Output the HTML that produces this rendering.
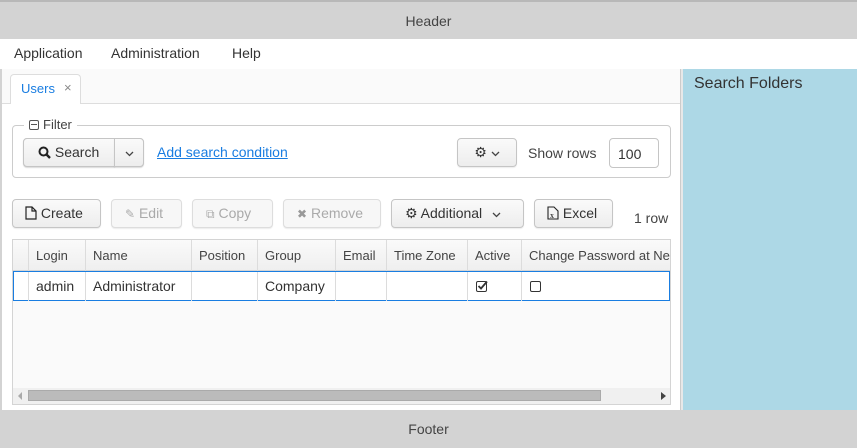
<!DOCTYPE html>
<html><head><meta charset="utf-8"><style>
*{box-sizing:border-box;margin:0;padding:0}
body{width:857px;height:448px;position:relative;overflow:hidden;font-family:"Liberation Sans","DejaVu Sans",sans-serif;font-size:14px;color:#333;background:#fff}
.a{position:absolute}
.btn{position:absolute;height:29px;border:1px solid #c5c5c5;border-radius:4px;background:linear-gradient(#fafafa,#ededed);box-shadow:0 1px 1px rgba(0,0,0,.08);font-size:14px;line-height:27px;color:#333;white-space:nowrap}
.dis{color:#aaa;border-color:#ddd;background:#f7f7f7}
.th{position:absolute;top:0;height:31px;line-height:31px;font-size:13px;color:#444;padding-left:7px;border-right:1px solid #dcdcdc;white-space:nowrap;overflow:hidden}
.td{position:absolute;top:0;height:29px;line-height:29px;font-size:14px;color:#333;padding-left:7px;border-right:1px solid #dcdcdc;white-space:nowrap}
</style></head><body>
<div class="a" style="left:0;top:0;width:857px;height:39px;background:#d3d3d3;border-top:2px solid #b8b8b8;text-align:center;line-height:38px;font-size:14px;color:#444">Header</div>
<div class="a" style="left:0;top:39px;width:857px;height:30px;background:#fff"></div>
<div class="a" style="left:14px;top:44px;font-size:14px;line-height:18px">Application</div>
<div class="a" style="left:111px;top:44px;font-size:14px;line-height:18px">Administration</div>
<div class="a" style="left:232px;top:44px;font-size:14px;line-height:18px">Help</div>
<div class="a" style="left:0;top:69px;width:2px;height:341px;background:#d3d3d3"></div>
<div class="a" style="left:2px;top:69px;width:678px;height:341px;background:#fafafa"></div>
<div class="a" style="left:2px;top:103px;width:678px;height:307px;background:#fff;border-top:1px solid #ddd"></div>
<div class="a" style="left:10px;top:74px;width:71px;height:30px;background:#fff;border:1px solid #ddd;border-bottom:none;border-radius:4px 4px 0 0"></div>
<div class="a" style="left:21px;top:81px;color:#197de1;font-size:13px;line-height:16px">Users</div>
<div class="a" style="left:64px;top:80px;color:#888;font-size:13px;line-height:16px">×</div>
<div class="a" style="left:680px;top:69px;width:3px;height:341px;background:#e8e8e8;border-left:1px solid #ccc"></div>
<div class="a" style="left:683px;top:69px;width:174px;height:341px;background:#add8e6"></div>
<div class="a" style="left:694px;top:75px;font-size:16px;color:#333;line-height:18px">Search Folders</div>
<!-- filter -->
<div class="a" style="left:12px;top:125px;width:659px;height:53px;border:1px solid #ccc;border-radius:4px"></div>
<div class="a" style="left:24px;top:117px;background:#fff;padding:0 5px;font-size:13px;line-height:16px;color:#444"><span style="display:inline-block;width:10px;height:10px;border:1px solid #555;border-radius:2px;position:relative;top:0;margin-right:4px;vertical-align:-1px"><span style="position:absolute;left:1px;top:3px;width:6px;height:1px;background:#555"></span></span>Filter</div>
<div class="btn" style="left:23px;top:138px;width:121px;"><span style="position:absolute;left:14px;top:0;font-weight:bold">&#x1F50D;&#xFE0E;</span></div>
<div class="btn" style="left:23px;top:138px;width:92px;border-radius:4px 0 0 4px;padding-left:14px"><svg width="13" height="13" viewBox="0 0 13 13" style="vertical-align:-2px"><circle cx="5.5" cy="5.5" r="4" fill="none" stroke="#222" stroke-width="2"/><path d="M8.5 8.5l3.5 3.5" stroke="#222" stroke-width="2.4"/></svg> Search</div>
<div class="btn" style="left:114px;top:138px;width:30px;border-radius:0 4px 4px 0;text-align:center"><svg width="9" height="6" viewBox="0 0 9 6"><path d="M1 1l3.5 3.5L8 1" fill="none" stroke="#444" stroke-width="1.3"/></svg></div>
<div class="a" style="left:157px;top:144px;color:#197de1;text-decoration:underline;font-size:14px;line-height:17px">Add search condition</div>
<div class="btn" style="left:457px;top:138px;width:60px;text-align:center"><span style="font-size:14px">&#9881;</span> <svg width="9" height="6" viewBox="0 0 9 6"><path d="M1 1l3.5 3.5L8 1" fill="none" stroke="#444" stroke-width="1.3"/></svg></div>
<div class="a" style="left:528px;top:145px;font-size:14px;line-height:17px;color:#444">Show rows</div>
<div class="a" style="left:609px;top:138px;width:50px;height:30px;border:1px solid #c5c5c5;border-radius:4px;padding-left:8px;line-height:30px">100</div>
<!-- buttons -->
<div class="btn" style="left:12px;top:199px;width:89px;padding-left:12px"><svg width="12" height="14" viewBox="0 0 12 14" style="vertical-align:-2px"><path d="M1 1h6l4 4v8H1z" fill="none" stroke="#222" stroke-width="1.2"/><path d="M7 1v4h4" fill="none" stroke="#222" stroke-width="1.2"/></svg> Create</div>
<div class="btn dis" style="left:111px;top:199px;width:71px;padding-left:13px"><span style="font-size:12px">&#9998;</span> Edit</div>
<div class="btn dis" style="left:192px;top:199px;width:81px;padding-left:13px"><span style="font-size:12px">&#10697;</span> Copy</div>
<div class="btn dis" style="left:283px;top:199px;width:98px;padding-left:13px"><span style="font-size:12px;color:#999">&#10006;</span> Remove</div>
<div class="btn" style="left:391px;top:199px;width:133px;padding-left:13px">&#9881; Additional <svg width="9" height="6" viewBox="0 0 9 6" style="margin-left:6px"><path d="M1 1l3.5 3.5L8 1" fill="none" stroke="#444" stroke-width="1.3"/></svg></div>
<div class="btn" style="left:534px;top:199px;width:79px;padding-left:12px"><svg width="12" height="14" viewBox="0 0 12 14" style="vertical-align:-2px"><path d="M1 1h6l4 4v8H1z" fill="none" stroke="#222" stroke-width="1.1"/><text x="3" y="12" font-size="8" font-family="Liberation Serif">x</text></svg> Excel</div>
<div class="a" style="left:634px;top:210px;font-size:14px;line-height:17px;color:#444">1 row</div>
<!-- table -->
<div class="a" style="left:12px;top:239px;width:659px;height:166px;border:1px solid #d4d4d4;background:#fafafa;overflow:hidden">
 <div class="a" style="left:0;top:0;width:657px;height:31px;background:linear-gradient(#fafafa,#efefef);border-bottom:1px solid #d4d4d4">
  <div class="th" style="left:0;width:16px"></div>
  <div class="th" style="left:16px;width:57px">Login</div>
  <div class="th" style="left:73px;width:106px">Name</div>
  <div class="th" style="left:179px;width:66px">Position</div>
  <div class="th" style="left:245px;width:78px">Group</div>
  <div class="th" style="left:323px;width:51px">Email</div>
  <div class="th" style="left:374px;width:81px">Time Zone</div>
  <div class="th" style="left:455px;width:54px">Active</div>
  <div class="th" style="left:509px;width:160px;border:none">Change Password at Next Logon</div>
 </div>
 <div class="a" style="left:0;top:31px;width:657px;height:30px;background:#fff;border:1px solid #197de1">
  <div class="td" style="left:-1px;width:16px"></div>
  <div class="td" style="left:15px;width:57px">admin</div>
  <div class="td" style="left:72px;width:106px">Administrator</div>
  <div class="td" style="left:178px;width:66px"></div>
  <div class="td" style="left:244px;width:78px">Company</div>
  <div class="td" style="left:322px;width:51px"></div>
  <div class="td" style="left:373px;width:81px"></div>
  <div class="td" style="left:454px;width:54px"><svg width="12" height="12" viewBox="0 0 12 12" style="position:absolute;left:8px;top:8px"><rect x="0.5" y="1.5" width="10" height="10" rx="1.5" fill="none" stroke="#333"/><path d="M2.5 6l2.5 2.5L11 1.5" fill="none" stroke="#333" stroke-width="1.8"/></svg></div>
  <div class="td" style="left:508px;width:150px;border:none"><span style="position:absolute;left:8px;top:9px;width:11px;height:11px;border:1px solid #333;border-radius:2px"></span></div>
 </div>
 <div class="a" style="left:0;top:148px;width:657px;height:16px;background:#f0f0f0"></div>
 <div class="a" style="left:5px;top:152px;width:0;height:0;border-top:4px solid transparent;border-bottom:4px solid transparent;border-right:4px solid #aaa"></div>
 <div class="a" style="left:15px;top:150px;width:573px;height:11px;background:#bbb;border:1px solid #aaa"></div>
 <div class="a" style="left:648px;top:152px;width:0;height:0;border-top:4px solid transparent;border-bottom:4px solid transparent;border-left:5px solid #444"></div>
</div>
<div class="a" style="left:0;top:410px;width:857px;height:38px;background:#d3d3d3;text-align:center;line-height:38px;font-size:14px;color:#444">Footer</div>
</body></html>
